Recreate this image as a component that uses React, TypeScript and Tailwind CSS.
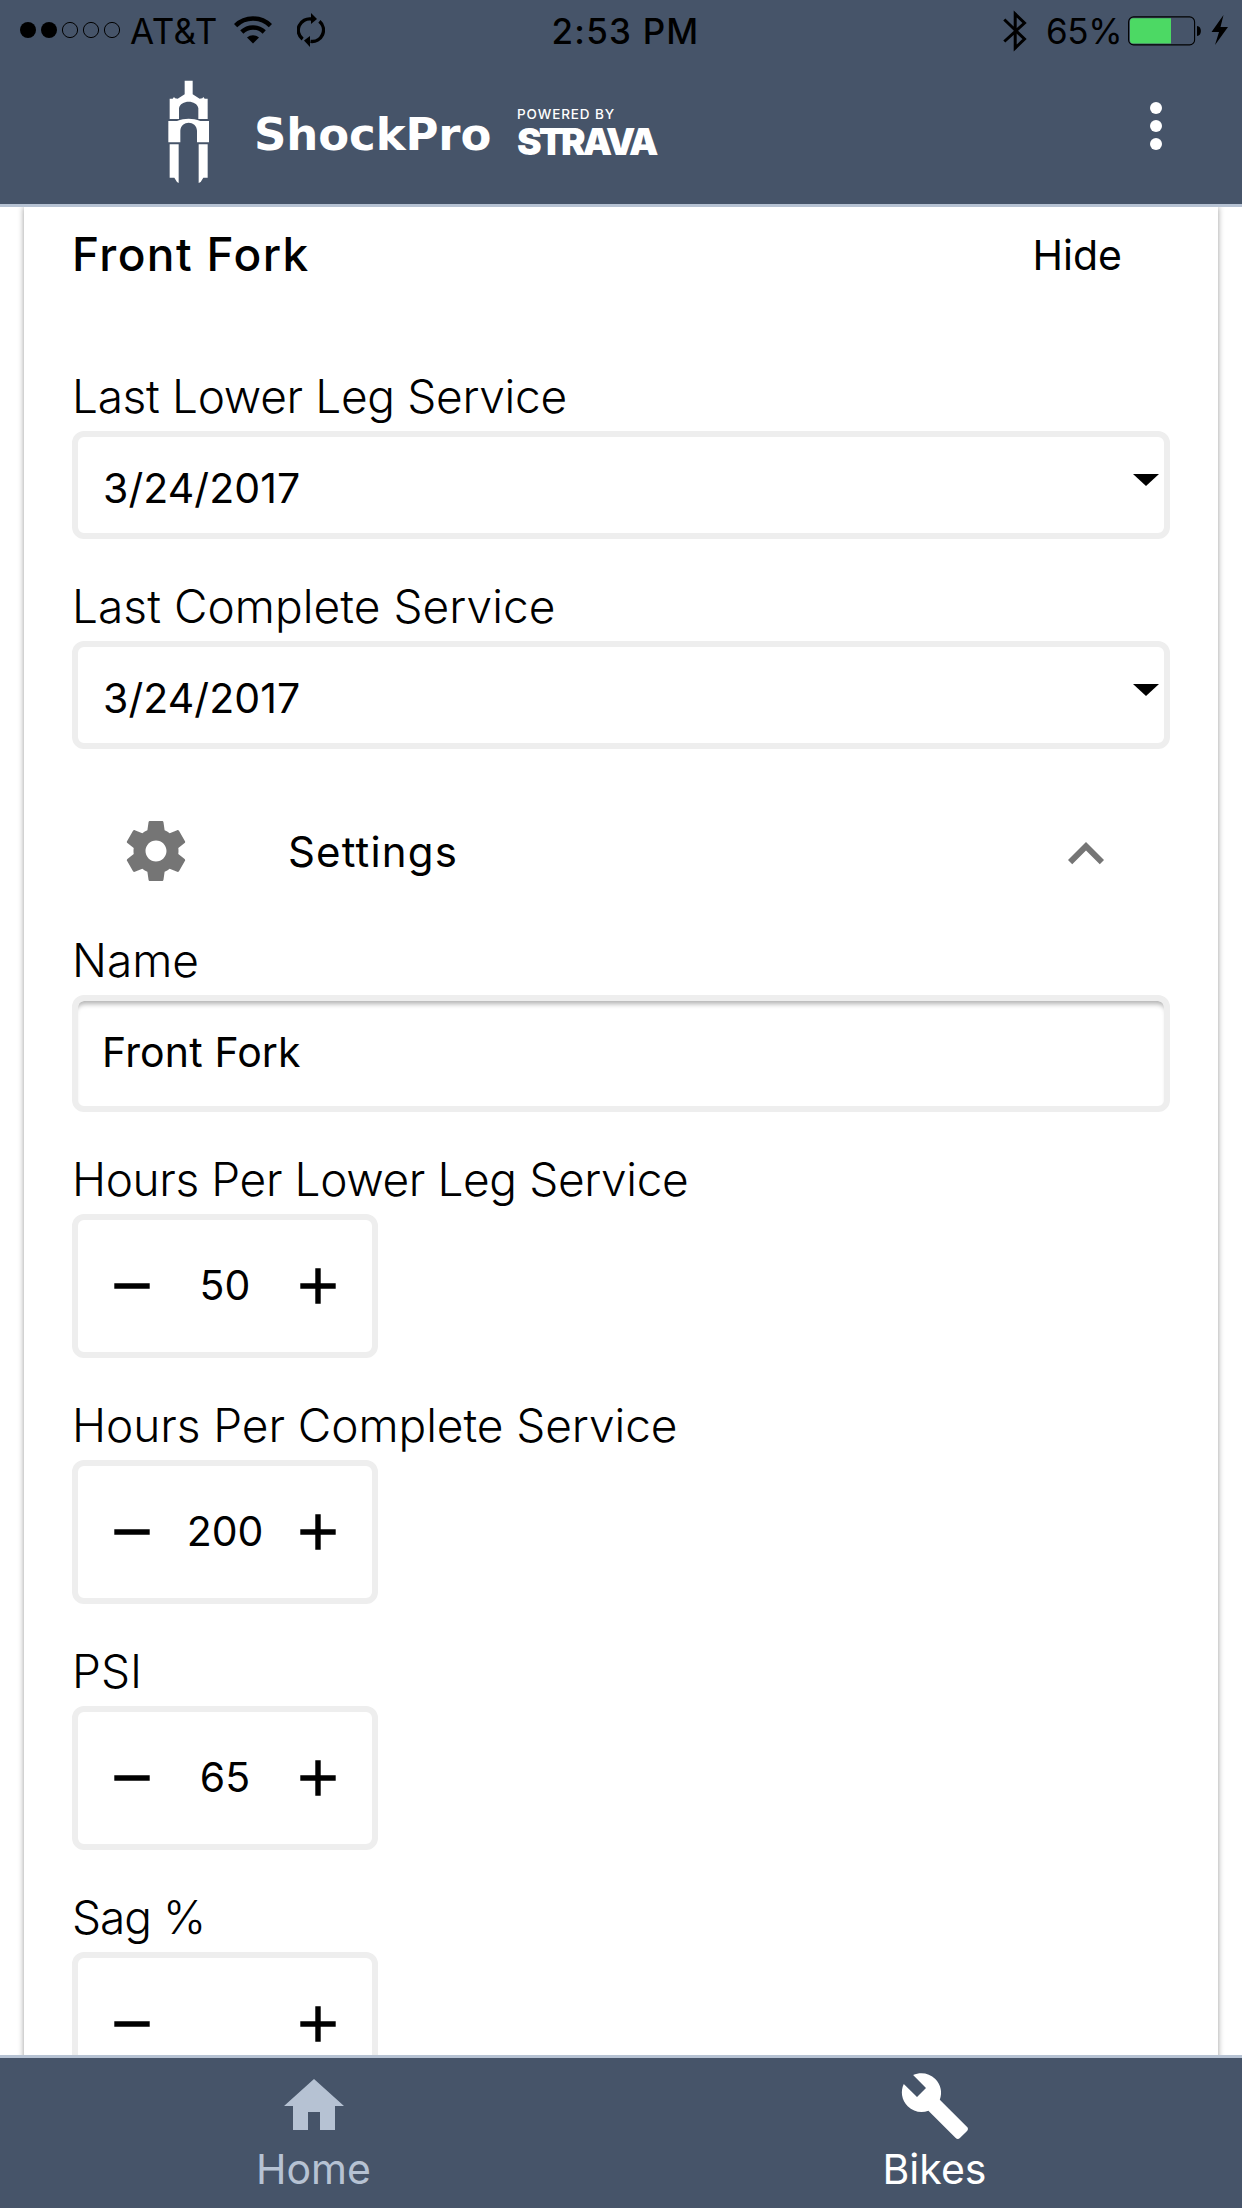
import type { ReactNode } from "react";

type FieldProps = {
  label: string;
  tracking?: string;
  children: ReactNode;
};

const steppers = [
  { label: "Hours Per Lower Leg Service", value: "50", tracking: "tracking-[-0.38px]" },
  { label: "Hours Per Complete Service", value: "200", tracking: "tracking-[-0.06px]" },
  { label: "PSI", value: "65", tracking: "tracking-normal" },
  { label: "Sag %", value: "", tracking: "tracking-[-1px]" },
];

function StatusBar() {
  return (
    <div className="flex h-[62px] items-center justify-between pl-5 pr-[13px] text-[35px] leading-[62px] text-black">
      <div className="flex w-[520px] items-center">
        <svg width="100" height="18" viewBox="0 0 100 18" className="-mt-[2px]">
          <circle cx="8" cy="9" r="8" />
          <circle cx="29" cy="9" r="8" />
          <g fill="none" stroke="black" strokeWidth="1">
            <circle cx="50" cy="9" r="7.6" />
            <circle cx="71" cy="9" r="7.6" />
            <circle cx="92" cy="9" r="7.6" />
          </g>
        </svg>
        <span className="ml-[10px] w-[87px] tracking-[0.5px]">AT&amp;T</span>
        <svg width="38" height="28" viewBox="0 0 38 28" className="ml-[17px] -mt-[3px]">
          <g fill="none" stroke="black" strokeWidth="4.6">
            <path d="M1.6 9.6a25 25 0 0 1 34.8 0" />
            <path d="M7.8 16a16.2 16.2 0 0 1 22.4 0" />
          </g>
          <path d="M13 21.6a8.6 8.6 0 0 1 12 0l-6 6z" />
        </svg>
        <svg width="28" height="34" viewBox="0 0 28 34" className="ml-[25px] -mt-[3px]">
          <g fill="none" stroke="black" strokeWidth="3.4">
            <path d="M5.600 26.200A11.400 11.400 0 0 1 14.500 6" />
            <path d="M22.400 8.400A11.400 11.400 0 0 1 13.500 28.400" />
          </g>
          <path d="M14 0l6 6-6 5z" />
          <path d="M13 34l-6-6.500 6-4.500z" />
        </svg>
      </div>
      <span className="ml-[2px] font-medium tracking-[1.2px]">2:53 PM</span>
      <div className="flex w-[520px] items-center justify-end">
        <svg width="24" height="42" viewBox="0 0 24 42" className="-mt-[1px]">
          <path
            d="M1.300 9.500L21.500 29 12.200 38V4L21.500 13 1.300 31.500"
            fill="none"
            stroke="black"
            strokeWidth="3"
          />
        </svg>
        <span className="ml-[19px] w-[74px] tracking-[-0.4px]">65%</span>
        <svg width="75" height="30" viewBox="0 0 75 30" className="ml-[8px] -mt-[1px]">
          <rect x="0.6" y="0.900" width="66" height="28" rx="5" fill="none" stroke="black" strokeWidth="1.1" />
          <path d="M5 2.200H43V27.500H5a3 3 0 0 1-3-3V5.200a3 3 0 0 1 3-3z" fill="#4cd964" />
          <path d="M69 10c5.200 0 5.200 10 0 10z" />
        </svg>
        <svg width="18" height="30" viewBox="0 0 18 30" className="ml-[8px] -mt-[2px]">
          <path d="M12.500 0L0.500 17H8L4 30 17 12H9.500z" />
        </svg>
      </div>
    </div>
  );
}

function ForkLogo() {
  return (
    <svg width="42" height="104" viewBox="85 60 126 312" fill="white">
      <path d="M135 62h24v41l21 13 8-1 3-4 4 5h9v61h-28v-32c-4-26-54-26-58 0v32H90v-61h9l4-5 3 4 8 1 21-13z" />
      <path d="M86 183h26c24-9 46-9 70 0h26v64h-36v-35c-1-32-49-32-50 0v35H86z" />
      <path d="M90 253h27v116l-5-3-8-13H90zM177 253h27v100h-13l-8 13-6 3z" />
    </svg>
  );
}

function Header() {
  return (
    <header className="h-[207px] shrink-0 border-b-[3px] border-[#b6c2d3] bg-[#465469] text-white">
      <StatusBar />
      <div className="flex h-[142px] items-start pl-[168px]">
        <div className="pt-[18px]">
          <ForkLogo />
        </div>
        <h1 className="ml-[44px] w-[260px] pt-[43px] font-['DejaVu_Sans'] text-[45px] leading-[60px] font-bold tracking-[-0.1px]">
          ShockPro
        </h1>
        <div className="flex w-[160px] flex-col whitespace-nowrap pt-[42px] pl-[3px]">
          <span className="text-[13.5px] leading-[20px] font-medium tracking-[0.9px]">POWERED BY</span>
          <span className="text-[37px] leading-[36px] font-black tracking-[-3px]">STRAVA</span>
        </div>
        <svg width="12" height="48" viewBox="0 0 12 48" fill="white" className="mt-[40px] ml-[476px]">
          <circle cx="6" cy="6" r="6" />
          <circle cx="6" cy="24" r="6" />
          <circle cx="6" cy="42" r="6" />
        </svg>
      </div>
    </header>
  );
}

function Field({ label, tracking = "", children }: FieldProps) {
  return (
    <div>
      <label className={`block text-[46px] leading-[70px] font-light ${tracking}`}>{label}</label>
      {children}
    </div>
  );
}

function DateSelect({ value }: { value: string }) {
  return (
    <div className="flex h-[108px] items-center justify-between rounded-xl border-6 border-[#eee] pr-[5px] pl-[25px]">
      <span className="pt-[8px] text-[41px] tracking-[0.1px]">{value}</span>
      <svg width="26" height="12" viewBox="0 0 26 12" className="-mt-[10px]">
        <path d="M0 0h26L13 12z" />
      </svg>
    </div>
  );
}

function Stepper({ value }: { value: string }) {
  return (
    <div className="flex h-[144px] w-[306px] items-center justify-between rounded-xl border-6 border-[#eee] px-9">
      <svg width="36" height="36" viewBox="0 0 36 36">
        <path d="M.3 15.300h35.400v5.400H.3z" />
      </svg>
      <span className="text-[41px]">{value}</span>
      <svg width="36" height="36" viewBox="0 0 36 36">
        <path d="M.3 15.300h35.400v5.400H.3zM15.300.3h5.400v35.400h-5.400z" />
      </svg>
    </div>
  );
}

function Footer() {
  return (
    <nav className="flex h-[153px] shrink-0 border-t-[3px] border-[#b6c2d3] bg-[#465469] pl-[3px] text-[41px] leading-[60px]">
      <div className="flex w-[621px] shrink-0 flex-col items-center pt-3 text-[#b6c2d3]">
        <svg width="72" height="72" viewBox="0 0 24 24" fill="currentColor">
          <path d="M10 20v-6h4v6h5v-8h3L12 3 2 12h3v8z" />
        </svg>
        <span className="-mt-[3px]">Home</span>
      </div>
      <div className="flex w-[621px] shrink-0 flex-col items-center pt-3 text-white">
        <svg width="72" height="72" viewBox="0 0 24 24" fill="currentColor">
          <path d="M22.700 19l-9.100-9.100c.9-2.300.4-5-1.500-6.900-2-2-5-2.400-7.400-1.300L9 6 6 9 1.600 4.700C.4 7.100.9 10.100 2.900 12.100c1.900 1.900 4.600 2.400 6.900 1.500l9.100 9.100c.4.4 1 .4 1.400 0l2.300-2.300c.5-.4.5-1.100.1-1.400z" />
        </svg>
        <span className="-mt-[3px]">Bikes</span>
      </div>
    </nav>
  );
}

export default function App() {
  return (
    <div className="flex h-[2208px] w-[1242px] flex-col overflow-hidden bg-white font-[Inter,'Liberation_Sans',sans-serif] text-black">
      <Header />

      <main className="min-h-0 flex-1 overflow-hidden">
        <section className="mx-6 h-[2000px] bg-white px-12 shadow-[0_0_6px_rgba(0,0,0,0.4)]">
          <div className="flex h-[94px] items-center justify-between pr-12">
            <h2 className="text-[46px] font-medium tracking-[1.4px]">Front Fork</h2>
            <button className="pt-[3px] text-[41px]">Hide</button>
          </div>

          <div className="flex flex-col gap-8 pt-[60px]">
            <Field label="Last Lower Leg Service" tracking="tracking-[-0.32px]">
              <DateSelect value="3/24/2017" />
            </Field>
            <Field label="Last Complete Service" tracking="tracking-[0.06px]">
              <DateSelect value="3/24/2017" />
            </Field>
          </div>

          <div className="mt-[26px] flex h-[150px] items-center px-12">
            <svg width="72" height="72" viewBox="0 0 24 24" fill="#757575" className="mt-[2px]">
              <path d="M19.430 12.980c.04-.32.07-.64.07-.98s-.03-.66-.07-.98l2.110-1.650c.19-.15.24-.42.12-.64l-2-3.460c-.12-.22-.39-.3-.61-.22l-2.490 1c-.52-.4-1.080-.73-1.690-.98l-.38-2.650C14.460 2.180 14.250 2 14 2h-4c-.25 0-.46.18-.49.42l-.38 2.650c-.61.25-1.170.59-1.690.98l-2.490-1c-.23-.09-.49 0-.61.22l-2 3.460c-.13.22-.07.49.12.64l2.110 1.650c-.04.32-.07.65-.07.98s.03.66.07.98l-2.110 1.650c-.19.15-.24.42-.12.64l2 3.460c.12.22.39.3.61.22l2.490-1c.52.4 1.080.73 1.690.98l.38 2.650c.03.24.24.42.49.42h4c.25 0 .46-.18.49-.42l.38-2.650c.61-.25 1.170-.59 1.690-.98l2.490 1c.23.09.49 0 .61-.22l2-3.460c.12-.22.07-.49-.12-.64l-2.110-1.650zM12 15.500c-1.930 0-3.500-1.570-3.500-3.500s1.570-3.500 3.500-3.500 3.500 1.570 3.500 3.500-1.570 3.500-3.500 3.500z" />
            </svg>
            <span className="ml-24 flex-1 pt-[2px] text-[42px] tracking-[1.15px]">Settings</span>
            <svg width="72" height="72" viewBox="0 0 24 24" fill="#757575" className="mt-[8px]">
              <path d="M12 8l-6 6 1.410 1.410L12 10.830l4.590 4.580L18 14z" />
            </svg>
          </div>

          <div className="flex flex-col gap-8">
            <Field label="Name">
              <div className="flex h-[117px] items-center rounded-xl border-6 border-[#eee] pb-[1px] pl-[24px] text-[41px] tracking-[0.15px] shadow-[inset_0_6px_5px_-3px_rgba(0,0,0,0.3)]">
                Front Fork
              </div>
            </Field>
            {steppers.map((s) => (
              <Field key={s.label} label={s.label} tracking={s.tracking}>
                <Stepper value={s.value} />
              </Field>
            ))}
          </div>
        </section>
      </main>

      <Footer />
    </div>
  );
}
